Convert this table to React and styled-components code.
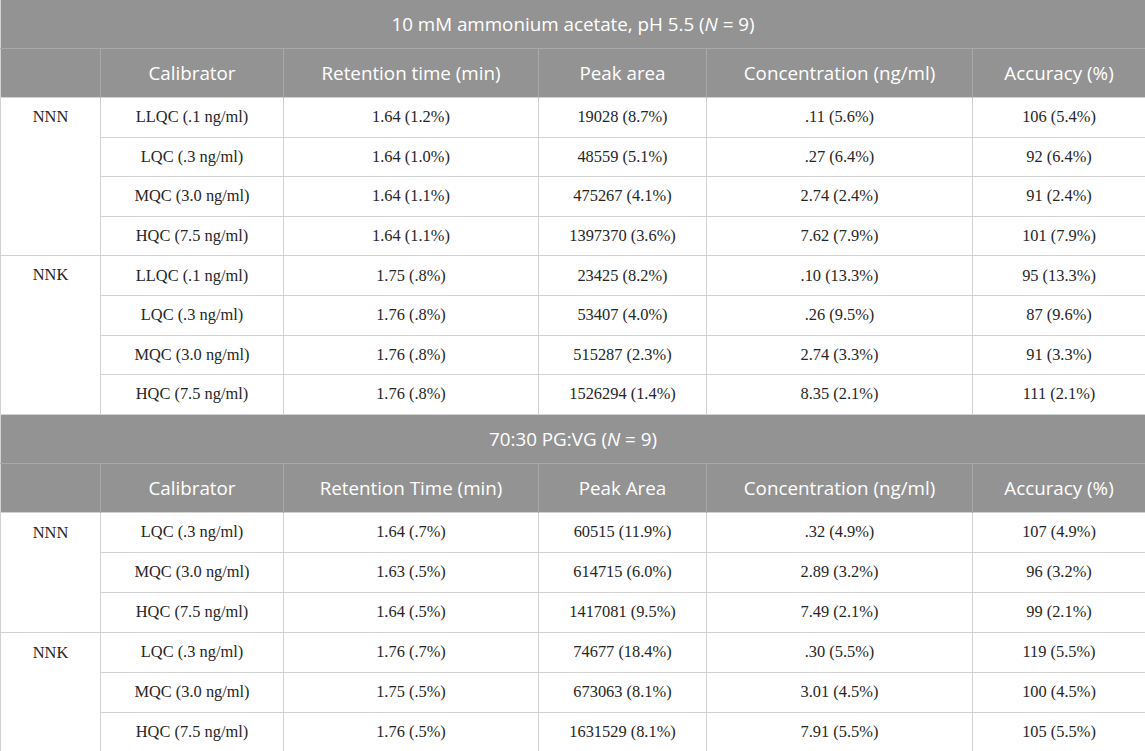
import React from 'react';
import styled, { createGlobalStyle } from 'styled-components';

const GlobalStyle = createGlobalStyle`
    html, body {
        margin: 0;
        padding: 0;
        background: #ffffff;
    }
`;

const Table = styled.table`
    width: 1145px;
    table-layout: fixed;
    border-collapse: collapse;
    border: 1px solid #d2d2d2;
    border-top: none;
`;

const TitleCell = styled.th`
    height: 48px;
    padding: 0;
    background: #939393;
    color: #ffffff;
    font-family: "Open Sans", "Noto Sans", sans-serif;
    font-weight: 400;
    font-size: 18.8px;
    text-align: center;
    border: none;
    border-bottom: 1px solid #a9a9a9;
    em {
        font-style: italic;
    }
`;

const HeadCell = styled.th`
    height: 48px;
    padding: 0;
    background: #939393;
    color: #ffffff;
    font-family: "Open Sans", "Noto Sans", sans-serif;
    font-weight: 400;
    font-size: 18.8px;
    text-align: center;
    border-left: 1px solid #a9a9a9;
    border-top: 1px solid #a9a9a9;
    &:first-child {
        border-left: none;
    }
`;

const Cell = styled.td`
    height: ${props => props.$h}px;
    padding: 0;
    text-align: center;
    vertical-align: middle;
    font-family: "Liberation Serif", "Times New Roman", serif;
    font-size: 16.4px;
    color: #262626;
    border: 1px solid #d2d2d2;
`;

const GroupCell = styled.td`
    padding: 0;
    text-align: center;
    vertical-align: top;
    line-height: ${props => props.$h}px;
    font-family: "Liberation Serif", "Times New Roman", serif;
    font-size: 16.4px;
    color: #262626;
    border: 1px solid #d2d2d2;
`;

const sections = [
    {
        title: '10 mM ammonium acetate, pH 5.5',
        headers: ['Calibrator', 'Retention time (min)', 'Peak area', 'Concentration (ng/ml)', 'Accuracy (%)'],
        rowHeight: 38.6,
        groups: [
            {
                name: 'NNN',
                rows: [
                    ['LLQC (.1 ng/ml)', '1.64 (1.2%)', '19028 (8.7%)', '.11 (5.6%)', '106 (5.4%)'],
                    ['LQC (.3 ng/ml)', '1.64 (1.0%)', '48559 (5.1%)', '.27 (6.4%)', '92 (6.4%)'],
                    ['MQC (3.0 ng/ml)', '1.64 (1.1%)', '475267 (4.1%)', '2.74 (2.4%)', '91 (2.4%)'],
                    ['HQC (7.5 ng/ml)', '1.64 (1.1%)', '1397370 (3.6%)', '7.62 (7.9%)', '101 (7.9%)'],
                ],
            },
            {
                name: 'NNK',
                rows: [
                    ['LLQC (.1 ng/ml)', '1.75 (.8%)', '23425 (8.2%)', '.10 (13.3%)', '95 (13.3%)'],
                    ['LQC (.3 ng/ml)', '1.76 (.8%)', '53407 (4.0%)', '.26 (9.5%)', '87 (9.6%)'],
                    ['MQC (3.0 ng/ml)', '1.76 (.8%)', '515287 (2.3%)', '2.74 (3.3%)', '91 (3.3%)'],
                    ['HQC (7.5 ng/ml)', '1.76 (.8%)', '1526294 (1.4%)', '8.35 (2.1%)', '111 (2.1%)'],
                ],
            },
        ],
    },
    {
        title: '70:30 PG:VG',
        headers: ['Calibrator', 'Retention Time (min)', 'Peak Area', 'Concentration (ng/ml)', 'Accuracy (%)'],
        rowHeight: 39,
        groups: [
            {
                name: 'NNN',
                rows: [
                    ['LQC (.3 ng/ml)', '1.64 (.7%)', '60515 (11.9%)', '.32 (4.9%)', '107 (4.9%)'],
                    ['MQC (3.0 ng/ml)', '1.63 (.5%)', '614715 (6.0%)', '2.89 (3.2%)', '96 (3.2%)'],
                    ['HQC (7.5 ng/ml)', '1.64 (.5%)', '1417081 (9.5%)', '7.49 (2.1%)', '99 (2.1%)'],
                ],
            },
            {
                name: 'NNK',
                rows: [
                    ['LQC (.3 ng/ml)', '1.76 (.7%)', '74677 (18.4%)', '.30 (5.5%)', '119 (5.5%)'],
                    ['MQC (3.0 ng/ml)', '1.75 (.5%)', '673063 (8.1%)', '3.01 (4.5%)', '100 (4.5%)'],
                    ['HQC (7.5 ng/ml)', '1.76 (.5%)', '1631529 (8.1%)', '7.91 (5.5%)', '105 (5.5%)'],
                ],
            },
        ],
    },
];

const widths = [100, 183, 255, 168, 266, 173];

function Section({ section }) {
    const h = section.rowHeight;
    return (
        <tbody>
            <tr>
                <TitleCell colSpan={6}>
                    {section.title} (<em>N</em> = 9)
                </TitleCell>
            </tr>
            <tr>
                <HeadCell />
                {section.headers.map(head => <HeadCell key={head}>{head}</HeadCell>)}
            </tr>
            {section.groups.map(group =>
                group.rows.map((row, i) => (
                    <tr key={group.name + i}>
                        {i === 0 && (
                            <GroupCell rowSpan={group.rows.length} $h={h}>{group.name}</GroupCell>
                        )}
                        {row.map((v, j) => <Cell key={j} $h={h}>{v}</Cell>)}
                    </tr>
                ))
            )}
        </tbody>
    );
}

export default function App() {
    return (
        <>
            <GlobalStyle />
            <Table>
                <colgroup>
                    {widths.map((w, i) => <col key={i} style={{ width: w }} />)}
                </colgroup>
                {sections.map(s => <Section key={s.title} section={s} />)}
            </Table>
        </>
    );
}
